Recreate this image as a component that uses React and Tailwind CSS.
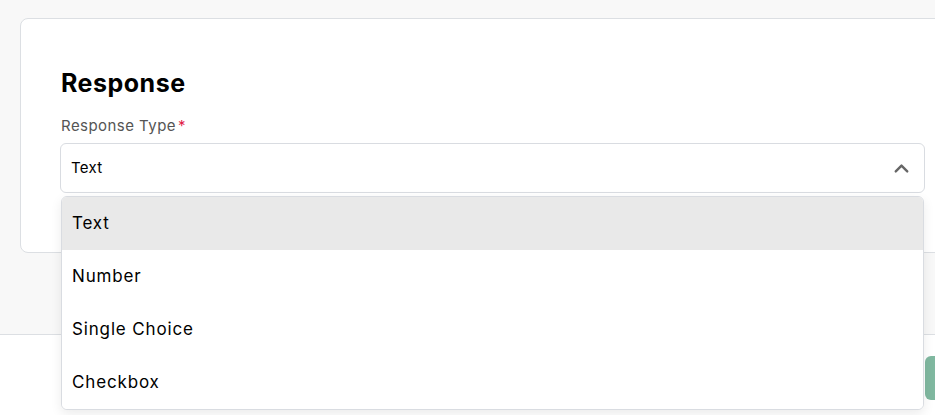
import React from "react";
import { ChevronUp } from "lucide-react";

const options = ["Text", "Number", "Single Choice", "Checkbox"];

const App = () => {
  const selected = "Text";

  return (
    <div className="w-[935px] h-[415px] overflow-hidden bg-[#f8f8f8] font-['Inter',sans-serif] text-black">
      {/* Page body */}
      <div className="h-[334px] px-5 pt-[18px]">
        <div className="w-[946px] rounded-lg border border-[#dcdfe3] bg-white pl-[39px] pr-10 pt-[48px] pb-[59px]">
          <h2 className="text-[25px] leading-8 font-bold tracking-[0.02em] pl-px">Response</h2>

          <label className="mt-[17px] block pl-px text-[15px] leading-5 text-[#555] tracking-[0.03em]">
            Response Type<span className="ml-0.5 text-[#e11d48]">*</span>
          </label>

          {/* Select */}
          <div className="relative mt-[7px]">
            <div className="flex h-[50px] items-center justify-between rounded-md border border-[#d9dce1] bg-white pl-[10px] pr-[11px]">
              <span className="text-[15px] tracking-[0.02em]">{selected}</span>
              <ChevronUp size={23} strokeWidth={2.5} className="text-[#666]" />
            </div>

            {/* Open menu */}
            <ul className="absolute left-px right-px top-[53px] z-10 overflow-hidden rounded-md border border-[#d9dce1] bg-white shadow-[0_4px_12px_rgba(0,0,0,0.08)]">
              {options.map((opt) => (
                <li
                  key={opt}
                  className={`flex h-[53px] items-center px-[10px] text-[17px] tracking-[0.05em] ${
                    opt === selected ? "bg-[#e9e9e9]" : "bg-white"
                  }`}
                >
                  {opt}
                </li>
              ))}
            </ul>
          </div>
        </div>
      </div>

      {/* Footer */}
      <div className="h-[81px] border-t border-[#dcdfe3] bg-white pt-[21px] pl-[925px]">
        <button className="h-[44px] w-[120px] rounded-md bg-[#80b8a0]" />
      </div>
    </div>
  );
};

export default App;
